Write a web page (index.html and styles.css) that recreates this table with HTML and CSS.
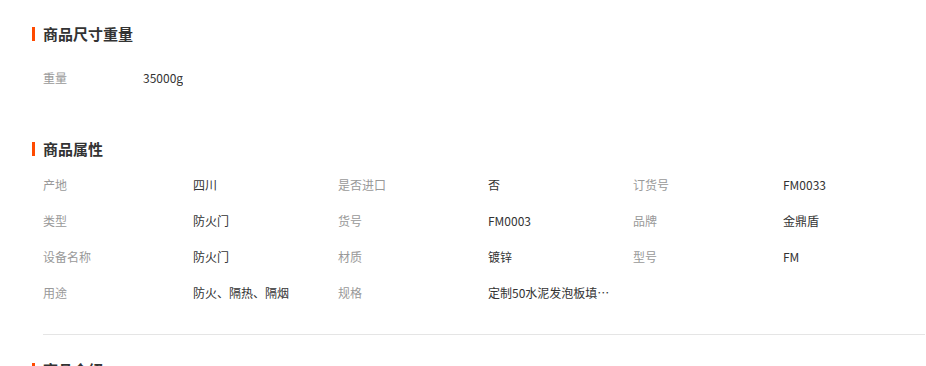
FILE: index.html
```html
<!DOCTYPE html>
<html lang="zh-CN">
<head>
<meta charset="utf-8">
<title>商品参数</title>
<link rel="stylesheet" href="styles.css">
</head>
<body>
<div class="page">
  <section class="section section-size">
    <h2 class="sec-title"><span class="bar"></span>商品尺寸重量</h2>
    <div class="attr-list attr-list-size">
      <div class="attr"><span class="label">重量</span><span class="value">35000g</span></div>
    </div>
  </section>

  <section class="section section-props">
    <h2 class="sec-title"><span class="bar"></span>商品属性</h2>
    <div class="attr-list">
      <div class="attr"><span class="label">产地</span><span class="value">四川</span></div>
      <div class="attr"><span class="label">是否进口</span><span class="value">否</span></div>
      <div class="attr"><span class="label">订货号</span><span class="value">FM0033</span></div>
      <div class="attr"><span class="label">类型</span><span class="value">防火门</span></div>
      <div class="attr"><span class="label">货号</span><span class="value">FM0003</span></div>
      <div class="attr"><span class="label">品牌</span><span class="value">金鼎盾</span></div>
      <div class="attr"><span class="label">设备名称</span><span class="value">防火门</span></div>
      <div class="attr"><span class="label">材质</span><span class="value">镀锌</span></div>
      <div class="attr"><span class="label">型号</span><span class="value">FM</span></div>
      <div class="attr"><span class="label">用途</span><span class="value">防火、隔热、隔烟</span></div>
      <div class="attr"><span class="label">规格</span><span class="value">定制50水泥发泡板填充防火门</span></div>
    </div>
    <hr class="divider">
  </section>

  <section class="section section-intro">
    <h2 class="sec-title"><span class="bar"></span>商品介绍</h2>
  </section>
</div>
</body>
</html>
```

FILE: styles.css
```css
html, body {
  margin: 0;
  padding: 0;
  background: #fff;
}

body {
  font-family: "Noto Sans CJK SC", "Noto Sans", "Liberation Sans", sans-serif;
  font-size: 12px;
  color: #333;
  overflow: hidden;
}

.page {
  padding: 24px 0 0 32px;
}

.section {
  margin: 0;
}

.sec-title {
  display: flex;
  align-items: center;
  height: 20px;
  margin: 0;
  font-size: 15px;
  line-height: 20px;
  font-weight: bold;
  color: #333;
}

.bar {
  display: inline-block;
  width: 3px;
  height: 14px;
  background: #ff4a00;
  margin-right: 8px;
  flex: none;
}

.attr-list {
  display: grid;
  grid-template-columns: repeat(3, 295px);
  margin-left: 11px;
  margin-top: 8px;
}

.attr-list-size {
  margin-top: 16px;
}

.attr-list-size .label {
  width: 100px;
}

.attr {
  display: flex;
  height: 36px;
  line-height: 36px;
  white-space: nowrap;
}

.label {
  width: 150px;
  flex: none;
  color: #999;
}

.value {
  max-width: 124px;
  overflow: hidden;
  text-overflow: ellipsis;
  color: #333;
}

.section-props {
  margin-top: 43px;
}

.divider {
  border: 0;
  height: 1px;
  background: #e5e5e5;
  margin: 23px 1px 0 11px;
}

.section-intro {
  margin-top: 25px;
}
```
